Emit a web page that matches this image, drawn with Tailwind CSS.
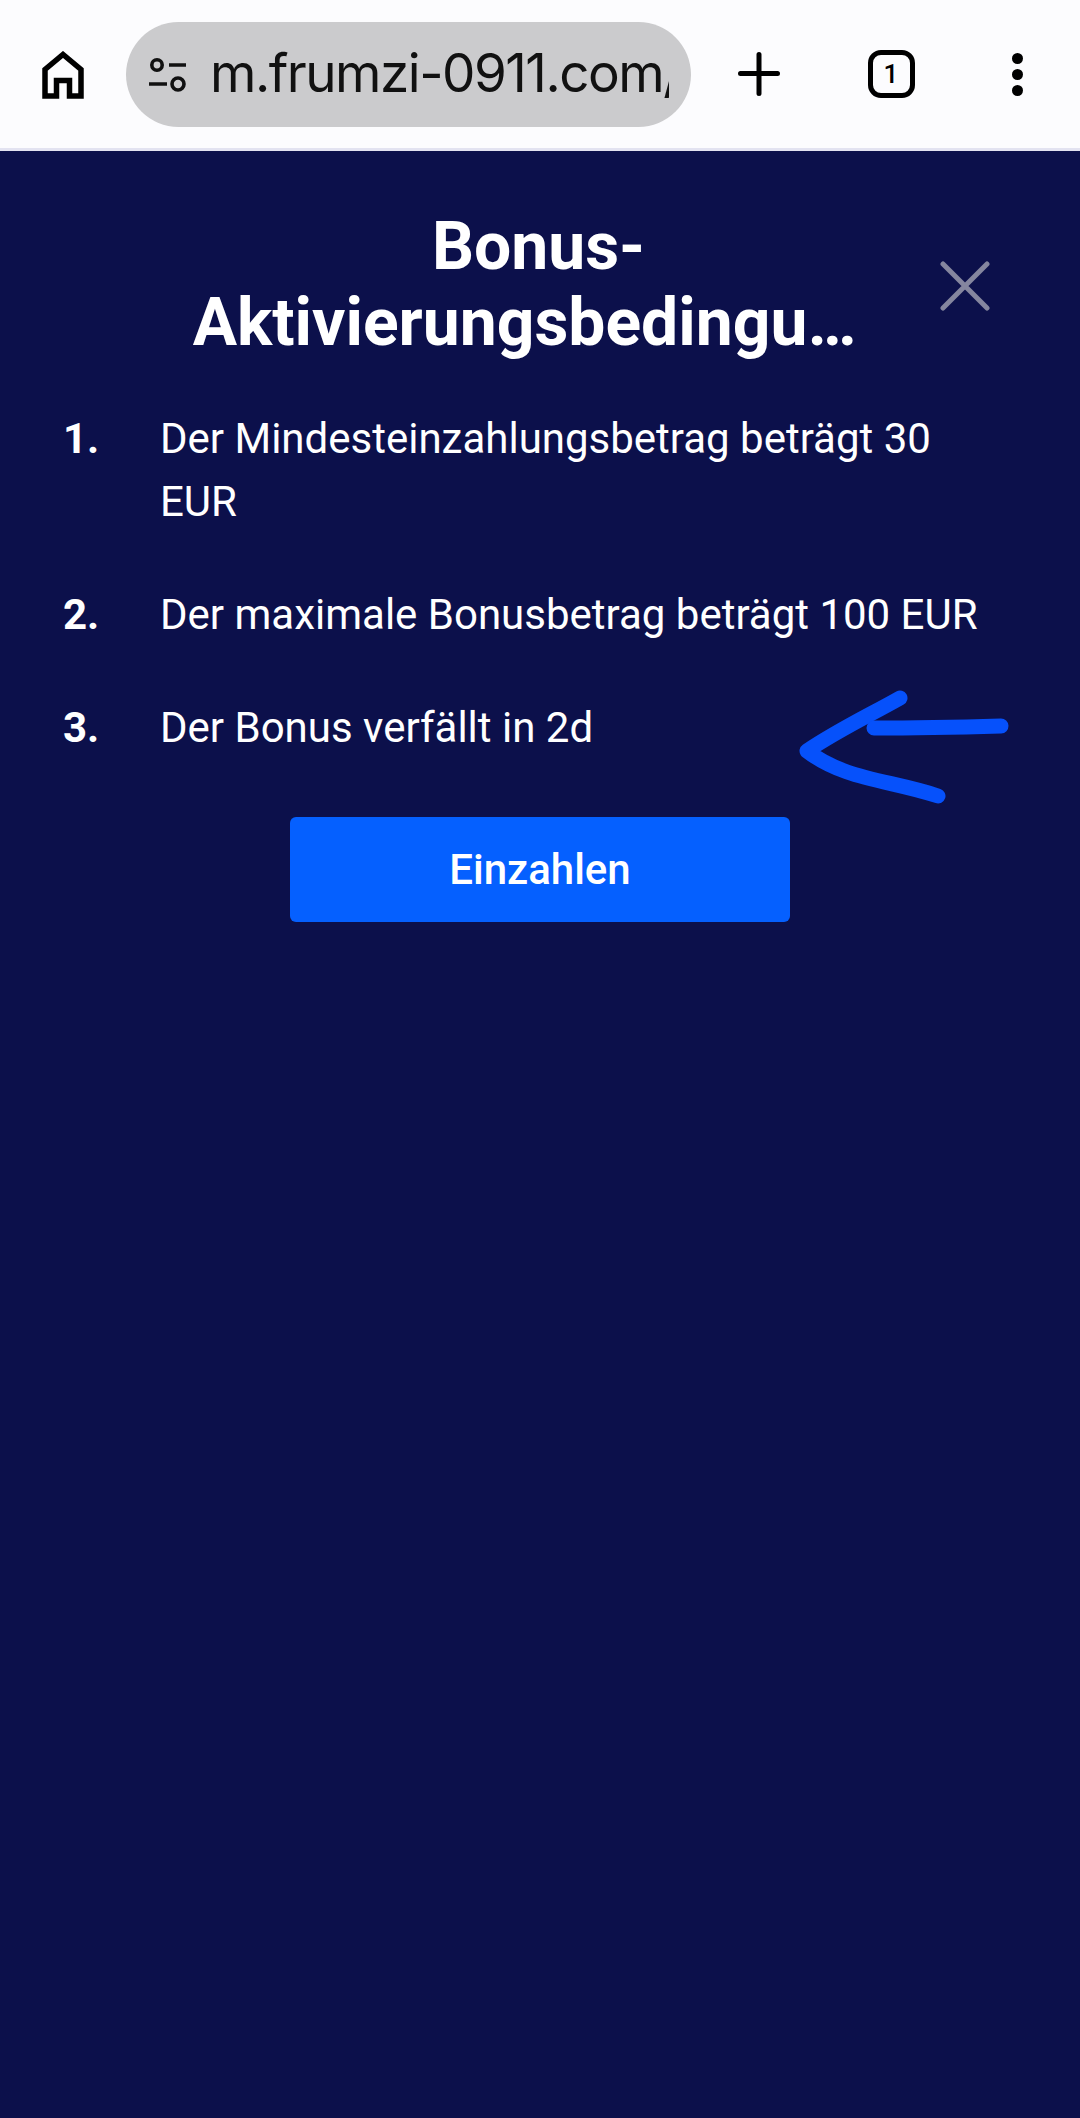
<!DOCTYPE html>
<html lang="en">
<head>
  <meta charset="UTF-8">
  <title>Bonus</title>
  <meta name="viewport" content="width=device-width, initial-scale=1">
  <script src="https://cdn.jsdelivr.net/npm/@tailwindcss/browser@4"></script>
</head>
<body class="bg-[#0c104b] h-[2118px] w-[1080px] overflow-hidden font-['Roboto',sans-serif] text-white">
  <!-- browser toolbar -->
  <div class="h-[151px] bg-[#fcfcfe] border-b-[3px] border-[#e3e3f1] flex items-start text-black">
    <div class="w-[126px] h-[148px] flex items-center justify-center">
      <svg width="42" height="48" viewBox="0 0 42 48" class="mt-[1px]" fill="none" stroke="#000" stroke-width="5.5">
        <path d="M3 45V18.5L21 3.5L39 18.5V45H27.5V29.5H14.5V45Z"/>
      </svg>
    </div>
    <div class="mt-[22px] w-[565px] h-[105px] rounded-full bg-[#cbcbcd] flex items-center pl-[22px] overflow-hidden">
      <svg width="40" height="36" viewBox="0 0 40 36" fill="none" stroke="#111" class="shrink-0" stroke-width="3.6">
        <circle cx="9" cy="8" r="5.2"/>
        <path d="M21 8H38"/>
        <path d="M1 27H19"/>
        <circle cx="30" cy="27" r="6"/>
      </svg>
      <div class="ml-[22px] mb-[3px] w-[459px] overflow-hidden whitespace-nowrap font-['Inter',sans-serif] text-[53px] leading-[64px] tracking-[-1.5px] text-[#111] font-normal">m.frumzi-0911.com/</div>
    </div>
    <div class="w-[136px] h-[148px] flex items-center justify-center">
      <svg width="42" height="44" viewBox="0 0 42 44" fill="none" stroke="#000" stroke-width="5" stroke-linecap="round">
        <path d="M21 2.5V41.5M2.5 21.5H39.5"/>
      </svg>
    </div>
    <div class="w-[128px] h-[148px] flex items-center justify-center">
      <div class="w-[47px] h-[48px] border-[5px] border-black rounded-[13px] flex items-center justify-center text-[26px] font-medium leading-none">1</div>
    </div>
    <div class="w-[124px] h-[148px] flex flex-col items-center justify-center gap-[5px]">
      <span class="w-[11px] h-[11px] rounded-full bg-black"></span>
      <span class="w-[11px] h-[11px] rounded-full bg-black"></span>
      <span class="w-[11px] h-[11px] rounded-full bg-black"></span>
    </div>
  </div>

  <!-- modal -->
  <div class="relative px-[63px] pt-[58px]">
    <h1 class="text-center text-[66px] leading-[76px] font-bold whitespace-nowrap">
      <div class="pr-[3px]">Bonus-</div>
      <div class="pr-[31px]">Aktivierungsbedingu…</div>
    </h1>
    <button class="absolute left-[937px] top-[107px] w-[56px] h-[56px] flex items-center justify-center">
      <svg width="50" height="50" viewBox="0 0 50 50" fill="none" stroke="#85869f" stroke-width="5" stroke-linecap="round">
        <path d="M3 3L47 47M47 3L3 47"/>
      </svg>
    </button>

    <ol class="mt-[46px] text-[42px] leading-[63px] flex flex-col gap-[50px]">
      <li class="flex">
        <span class="w-[97px] shrink-0 font-bold">1.</span>
        <span class="w-[820px]">Der Mindesteinzahlungsbetrag beträgt 30 EUR</span>
      </li>
      <li class="flex">
        <span class="w-[97px] shrink-0 font-bold">2.</span>
        <span>Der maximale Bonusbetrag beträgt 100 EUR</span>
      </li>
      <li class="flex">
        <span class="w-[97px] shrink-0 font-bold">3.</span>
        <span>Der Bonus verfällt in 2d</span>
      </li>
    </ol>

    <button class="block mx-auto mt-[58px] w-[500px] h-[105px] rounded-[6px] bg-[#0560ff] text-[42px] font-medium">Einzahlen</button>

    <!-- hand drawn arrow over the page -->
    <svg class="absolute left-[760px] top-[519px]" width="280" height="150" viewBox="0 0 280 150" fill="none" stroke="#0651fb" stroke-width="15" stroke-linecap="round" stroke-linejoin="round">
      <path d="M140 28C110 45 78 60 47 81C85 110 130 110 178 126"/>
      <path d="M114 58C160 58 205 57 241 56"/>
    </svg>
  </div>
</body>
</html>
